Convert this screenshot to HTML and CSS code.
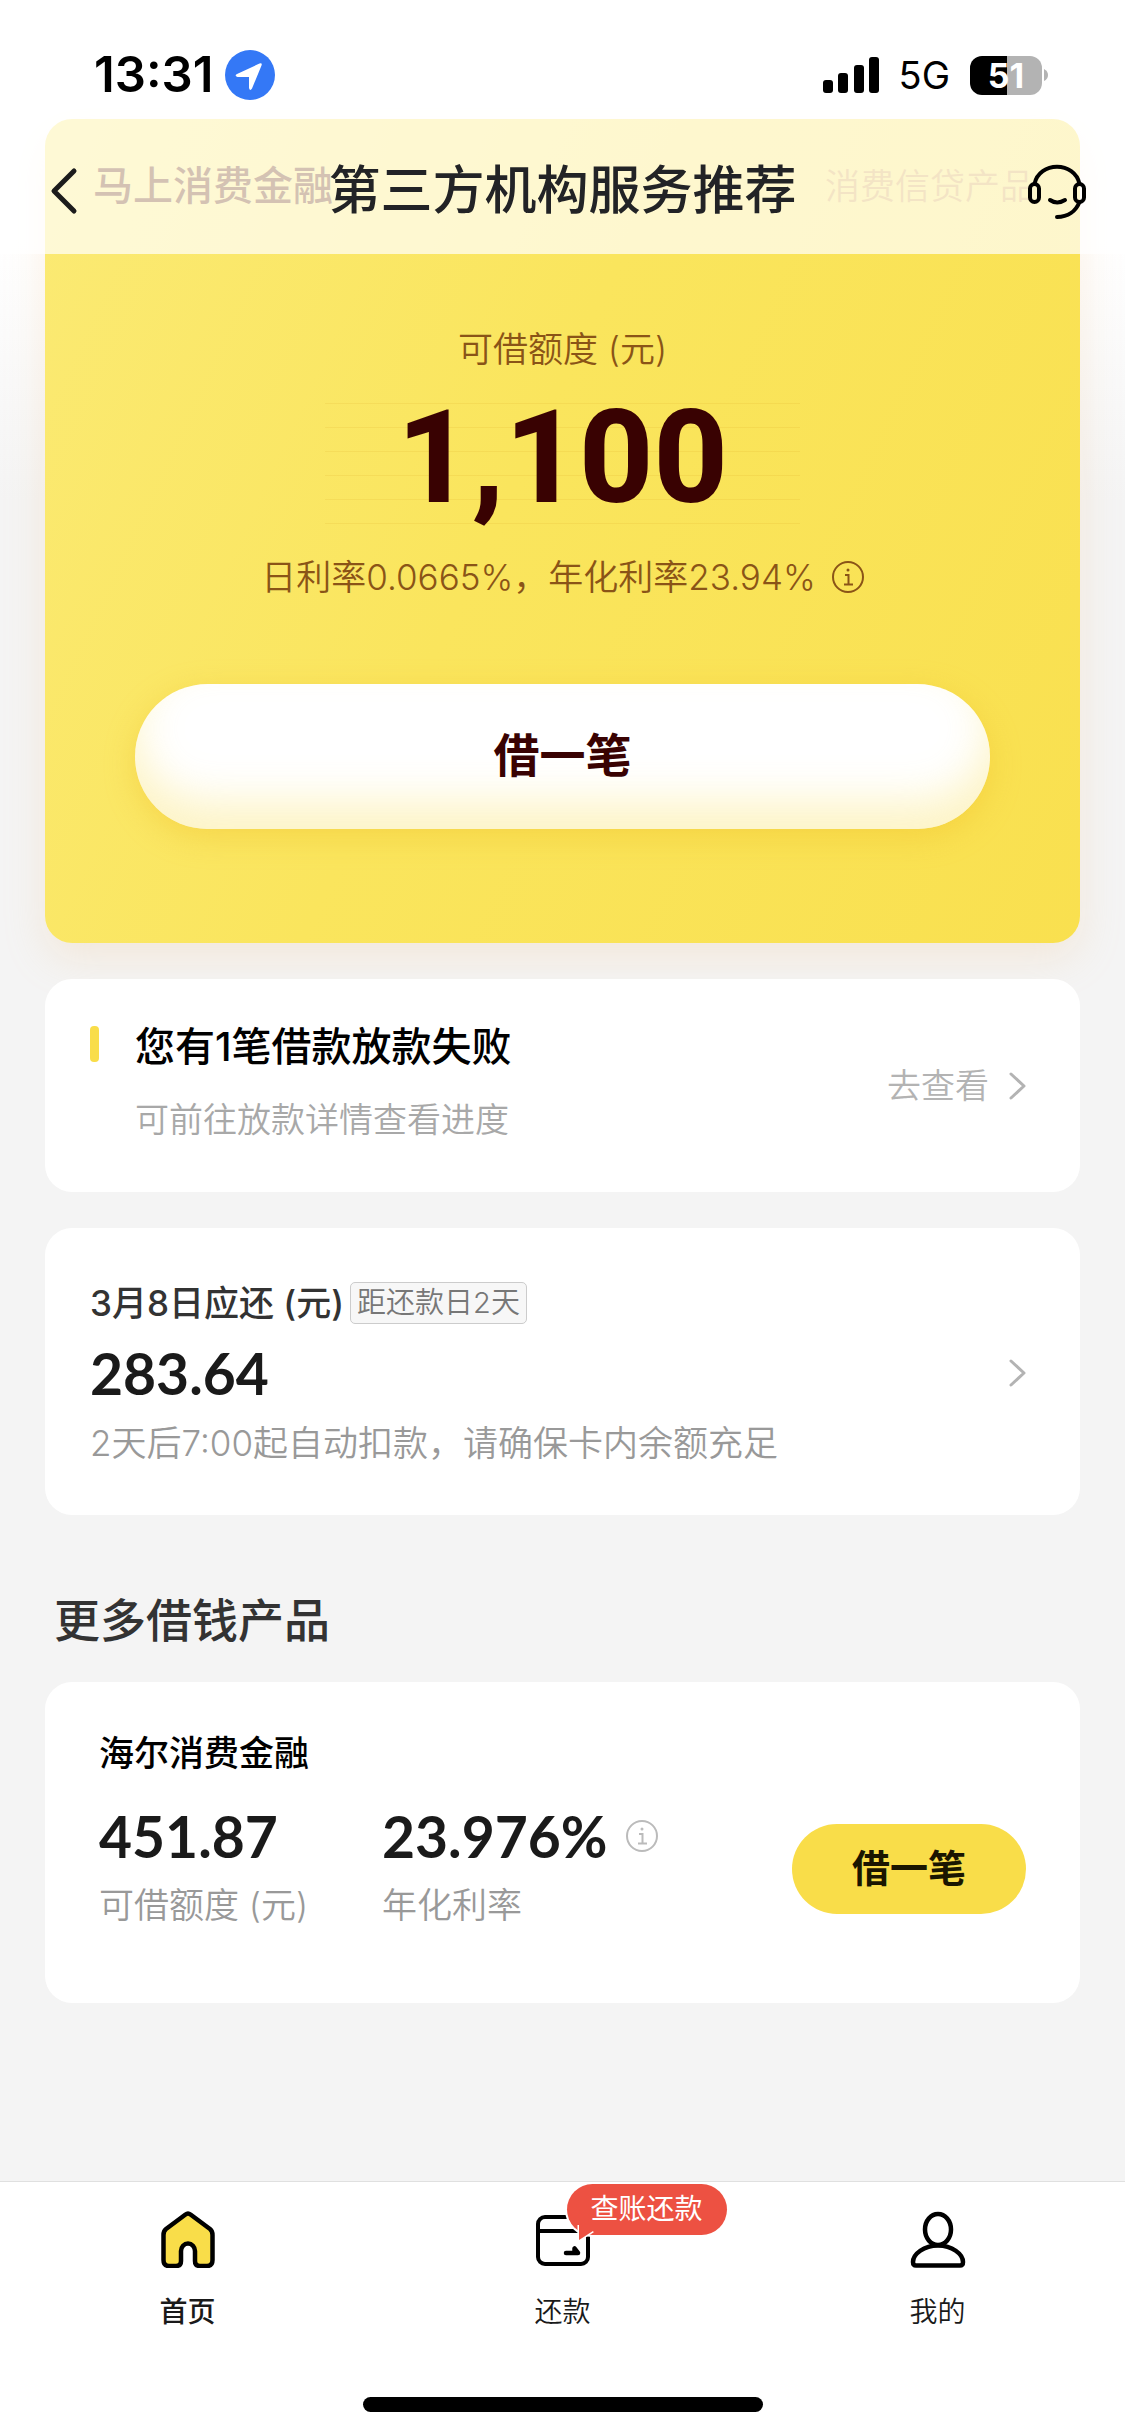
FILE: index.html
```html
<!DOCTYPE html>
<html lang="zh-CN">
<head>
<meta charset="utf-8">
<meta name="viewport" content="width=device-width, initial-scale=1">
<title>第三方机构服务推荐</title>
<link rel="stylesheet" href="styles.css">
</head>
<body>
<div class="screen">
  <header class="topbar">
    <div class="status">
      <div class="status-group">
        <span class="clock">13:31</span>
        <svg class="location" viewBox="0 0 50 50" aria-hidden="true"><circle cx="25" cy="25" r="25" fill="#3478f6"/><path d="M12 24 34.500 13.500Q37.500 12.500 36.500 15.500L27 38.500Q25 41.500 24 38V27H12.500Q9 25.500 12 24Z" fill="#fff"/></svg>
      </div>
      <div class="status-group status-right">
        <svg class="signal" viewBox="0 0 56 36" aria-hidden="true"><rect x="0" y="23" width="10" height="13" rx="3"/><rect x="15" y="16" width="10" height="20" rx="3"/><rect x="31" y="8" width="10" height="28" rx="3"/><rect x="46" y="0" width="10" height="36" rx="3"/></svg>
        <span class="network">5G</span>
        <span class="battery"><span class="battery-level">51</span><svg class="battery-tip" viewBox="0 0 4 12" aria-hidden="true"><path d="M0 0Q4 2 4 6T0 12Z" fill="#b3b3b3"/></svg></span>
      </div>
    </div>
    <nav class="nav">
      <button class="icon-button" aria-label="返回"><svg class="back" viewBox="0 0 28 48"><path d="M24 4 4 24 24 44" fill="none" stroke="#1c1c1c" stroke-width="5" stroke-linecap="round" stroke-linejoin="round"/></svg></button>
      <h1 class="nav-title">第三方机构服务推荐</h1>
      <button class="icon-button nav-end" aria-label="客服"><svg class="headset" viewBox="0 0 60 58"><g fill="none" stroke="#000" stroke-width="4" stroke-linecap="round"><path d="M7.500 22C12-1 48-1 52.500 22M23 38Q30 43 38 38M52.500 40C49 49 41 55 30 55"/><rect x="3" y="22" width="9" height="18" rx="4.500"/><rect x="48" y="22" width="9" height="18" rx="4.500"/></g></svg></button>
    </nav>
  </header>

  <main class="content">
    <section class="credit">
      <div class="credit-head">
        <h2 class="credit-name">马上消费金融</h2>
        <span class="credit-kind">消费信贷产品</span>
      </div>
      <p class="credit-label">可借额度 (元)</p>
      <p class="credit-amount">1,100</p>
      <p class="credit-rate">日利率0.0665%，年化利率23.94%
        <svg class="info" viewBox="0 0 32 32" aria-hidden="true"><g fill="none" stroke="currentColor" stroke-width="2"><circle cx="16" cy="16" r="15"/><path d="M13 14H16.500V23M12 23.500H21"/></g><circle cx="16" cy="9" r="1.500" fill="currentColor"/></svg>
      </p>
      <button class="credit-button">借一笔</button>
    </section>

    <a class="card notice" href="#loans">
      <span class="notice-mark"></span>
      <span class="notice-text">
        <strong class="notice-title">您有1笔借款放款失败</strong>
        <span class="note note-small">可前往放款详情查看进度</span>
      </span>
      <span class="more">去查看 <svg class="chevron" viewBox="0 0 17 28" aria-hidden="true"><path d="M2 2 15 14 2 26"/></svg></span>
    </a>

    <a class="card due" href="#repay">
      <span class="due-text">
        <span class="due-head">3月8日应还 (元)<span class="tag">距还款日2天</span></span>
        <strong class="figure">283.64</strong>
        <span class="note">2天后7:00起自动扣款，请确保卡内余额充足</span>
      </span>
      <span class="more"><svg class="chevron" viewBox="0 0 17 28" aria-hidden="true"><path d="M2 2 15 14 2 26"/></svg></span>
    </a>

    <h2 class="section-title">更多借钱产品</h2>
    <section class="card product">
      <h3 class="product-name">海尔消费金融</h3>
      <div class="product-row">
        <div>
          <strong class="figure">451.87</strong>
          <span class="note">可借额度 (元)</span>
        </div>
        <div>
          <strong class="figure">23.976% <svg class="info info-grey" viewBox="0 0 32 32" aria-hidden="true"><g fill="none" stroke="currentColor" stroke-width="2"><circle cx="16" cy="16" r="15"/><path d="M13 14H16.500V23M12 23.500H21"/></g><circle cx="16" cy="9" r="1.500" fill="currentColor"/></svg></strong>
          <span class="note">年化利率</span>
        </div>
        <button class="product-button">借一笔</button>
      </div>
    </section>
  </main>

  <footer class="tabbar">
    <nav class="tabs">
      <a class="tab tab-active" href="#home">
        <svg class="tab-icon" viewBox="0 0 56 58" aria-hidden="true"><path d="M25.500 4.500Q28 2.500 30.500 4.500L50 19Q52.500 21 52.500 25V50Q52.500 56 47 56H40Q35 56 35 51V41A7 7.500 0 0 0 21 41V51Q21 56 16 56H9Q3.500 56 3.500 50V25Q3.500 21 6 19Z" fill="#f9dd49" stroke="#000" stroke-width="4.500" stroke-linejoin="round"/></svg>
        首页
      </a>
      <a class="tab" href="#repay">
        <span class="tab-mark">
          <svg class="tab-icon" viewBox="0 0 56 58" aria-hidden="true"><g fill="none" stroke="#000" stroke-width="4" stroke-linecap="round" stroke-linejoin="round"><rect x="3" y="7" width="50" height="47" rx="7"/><path d="M3 21H53"/><path d="M31 43H43L39.500 38.500V43" stroke-width="4.500"/></g></svg>
          <span class="badge">查账还款<svg class="badge-tail" viewBox="0 0 20 18" aria-hidden="true"><path d="M3 0V15L17 6" fill="#ed5142" stroke="#fff" stroke-width="3"/><path d="M3 0V15L17 6V0Z" fill="#ed5142"/></svg></span>
        </span>
        还款
      </a>
      <a class="tab" href="#mine">
        <svg class="tab-icon" viewBox="0 0 56 58" aria-hidden="true"><g fill="none" stroke="#000" stroke-width="4.500"><ellipse cx="28" cy="19.500" rx="13" ry="15.500"/><path d="M28 35.500C42 35.500 53 44 53 52Q53 55.500 50 55.500H6Q3 55.500 3 52C3 44 14 35.500 28 35.500Z"/></g></svg>
        我的
      </a>
    </nav>
    <div class="home-indicator"></div>
  </footer>
</div>
</body>
</html>
```
FILE: styles.css
```css
* {
  box-sizing: border-box;
}

body,
h1,
h2,
h3,
p {
  margin: 0;
}

body {
  font-family: Inter, "Noto Sans CJK SC", sans-serif;
  font-size: 35px;
  font-weight: 350;
  line-height: 48px;
  color: #1a1a1a;
}

a {
  color: inherit;
  text-decoration: none;
}

button {
  margin: 0;
  padding: 0;
  border: 0;
  background: none;
  font: inherit;
  color: inherit;
}

svg {
  display: block;
  flex: none;
}

.screen {
  position: relative;
  display: flex;
  flex-direction: column;
  min-height: 100vh;
  background: linear-gradient(#fff 240px, #f4f4f4 500px);
}

/* Translucent bar over the scrolled page */
.topbar {
  position: absolute;
  top: 0;
  left: 0;
  right: 0;
  z-index: 2;
  background: rgba(255, 255, 255, 0.7);
}

.status {
  display: flex;
  justify-content: space-between;
  padding: 50px 77px 19px 94px;
}

.status-group {
  display: flex;
  align-items: center;
  gap: 12px;
  height: 50px;
  color: #000;
}

.status-right {
  gap: 20px;
}

.clock {
  font-size: 49px;
  font-weight: 600;
}

.location {
  width: 50px;
  height: 50px;
}

.signal {
  width: 56px;
  height: 36px;
}

.network {
  font-size: 38px;
  font-weight: 400;
}

.battery {
  display: flex;
  align-items: center;
  gap: 2px;
}

.battery-level {
  width: 72px;
  border-radius: 12px;
  background: linear-gradient(90deg, #000 51%, #b3b3b3 51%);
  font-size: 34px;
  font-weight: 700;
  line-height: 39px;
  text-align: center;
  color: #fff;
}

.battery-tip {
  width: 4px;
  height: 12px;
}

.nav {
  display: grid;
  grid-template-columns: 1fr auto 1fr;
  align-items: center;
  padding: 38px 38px 30px;
}

.icon-button {
  justify-self: start;
}

.nav-end {
  justify-self: end;
}

.back {
  width: 28px;
  height: 48px;
  margin-left: 12px;
}

.headset {
  width: 60px;
  height: 58px;
}

.nav-title {
  font-size: 52px;
  font-weight: 500;
  line-height: 67px;
  color: #222326;
}

.content {
  padding: 119px 45px 0;
}

.credit {
  padding: 37px 90px 114px;
  border-radius: 27px;
  background: linear-gradient(115deg, #fbea74, #fae55d 45%, #f9e04f);
  box-shadow: 0 16px 42px rgba(240, 190, 130, 0.22);
  text-align: center;
  color: #8a5417;
}

.credit-head {
  display: flex;
  justify-content: space-between;
  align-items: center;
  margin: 0 -45px 109px -42px;
  line-height: 60px;
}

.credit-name {
  font-size: 40px;
  font-weight: 500;
  color: #6e3400;
}

.credit-kind {
  color: #d8a43c;
}

.credit-amount {
  max-width: 475px;
  margin: 30px auto 29px;
  padding-bottom: 11px;
  background: repeating-linear-gradient(rgba(200, 130, 0, 0.1) 0 1px, transparent 1px 24px);
  font-family: Roboto, sans-serif;
  font-size: 129px;
  font-weight: 800;
  line-height: 110px;
  color: #390202;
}

.credit-rate {
  display: flex;
  justify-content: center;
  align-items: center;
  gap: 16px;
}

.info {
  width: 32px;
  height: 32px;
}

.info-grey {
  color: #bbb;
}

.credit-button {
  width: 100%;
  margin-top: 83px;
  padding-bottom: 3px;
  border-radius: 73px;
  background: #fff;
  box-shadow: inset 0 -28px 42px rgba(250, 230, 130, 0.45), 0 8px 30px rgba(240, 190, 40, 0.4);
  font-size: 46px;
  font-weight: 700;
  line-height: 142px;
  color: #390202;
}

.card {
  display: flex;
  justify-content: space-between;
  margin-top: 36px;
  border-radius: 27px;
  background: #fff;
}

.notice {
  padding: 38px 54px 48px 45px;
}

.notice-mark {
  flex: none;
  width: 9px;
  height: 36px;
  margin: 9px 36px 0 0;
  border-radius: 4px;
  background: #f9dd49;
}

.notice-text {
  flex: 1;
  display: flex;
  flex-direction: column;
  gap: 19px;
}

.notice-title {
  font-size: 40px;
  font-weight: 500;
  line-height: 60px;
  color: #000;
}

.note {
  display: block;
  color: #999;
}

.note-small {
  font-size: 34px;
  color: #a8a8a8;
}

.more {
  display: flex;
  align-items: center;
  gap: 20px;
  padding-top: 10px;
  font-size: 34px;
  color: #b3b3b3;
}

.chevron {
  width: 17px;
  height: 28px;
  fill: none;
  stroke: #b3b3b3;
  stroke-width: 3;
  stroke-linecap: round;
  stroke-linejoin: round;
}

.due {
  padding: 51px 54px 48px 45px;
}

.due .more {
  padding-top: 0;
}

.due-text {
  display: flex;
  flex-direction: column;
  gap: 16px;
}

.due-head {
  display: flex;
  align-items: center;
  gap: 6px;
  font-weight: 500;
  color: #333;
}

.tag {
  padding: 0 6px;
  border: 1px solid #ccc;
  border-radius: 5px;
  background: #f7f7f7;
  font-size: 29px;
  font-weight: 350;
  line-height: 40px;
  color: #777;
}

.figure {
  display: flex;
  align-items: center;
  gap: 18px;
  font-family: Lato, sans-serif;
  font-size: 57px;
  font-weight: 700;
  line-height: 60px;
}

.section-title {
  margin-top: 75px;
  padding-left: 9px;
  font-size: 46px;
  font-weight: 500;
  line-height: 60px;
  color: #333;
}

.product {
  flex-direction: column;
  gap: 29px;
  margin-top: 32px;
  padding: 47px 54px 74px;
}

.product-name {
  font-size: 35px;
  font-weight: 500;
  color: #000;
}

.product-row {
  display: grid;
  grid-template-columns: 283px 1fr auto;
  align-items: center;
}

.product-row .note {
  margin-top: 15px;
}

.product-button {
  margin-top: 2px;
  padding: 0 60px 2px;
  border-radius: 46px;
  background: #f9dd49;
  font-size: 38px;
  font-weight: 700;
  line-height: 88px;
  color: #1a1600;
}

.tabbar {
  margin-top: auto;
  padding-bottom: 23px;
  border-top: 1px solid #e0e0e0;
  background: #fff;
}

.tabs {
  display: grid;
  grid-template-columns: repeat(3, 1fr);
}

.tab {
  display: flex;
  flex-direction: column;
  align-items: center;
  gap: 24px;
  padding-top: 28px;
  font-size: 28px;
  line-height: 40px;
}

.tab-active {
  font-weight: 500;
}

.tab-mark {
  position: relative;
}

.tab-icon {
  width: 56px;
  height: 58px;
}

.badge {
  position: absolute;
  top: -26px;
  left: 32px;
  padding: 0 24px;
  border-radius: 26px;
  background: #ed5142;
  box-shadow: 0 0 0 2px #fff;
  font-weight: 400;
  line-height: 51px;
  white-space: nowrap;
  color: #fff;
}

.badge-tail {
  position: absolute;
  left: 9px;
  bottom: -8px;
  width: 20px;
  height: 18px;
}

.home-indicator {
  width: 400px;
  height: 15px;
  margin: 65px auto 0;
  border-radius: 8px;
  background: #000;
}
```
